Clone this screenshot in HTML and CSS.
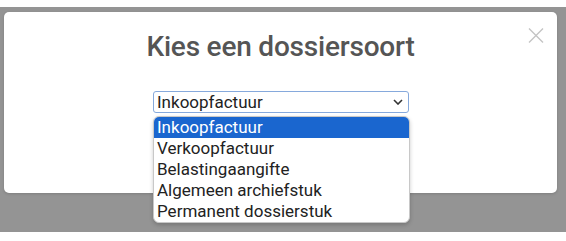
FILE: index.html
```html
<!DOCTYPE html>
<html lang="nl">
<head>
<meta charset="utf-8">
<title>Kies een dossiersoort</title>
<link rel="stylesheet" href="styles.css">
</head>
<body>
<div class="page">
  <div class="backdrop">
    <div class="modal">
      <button class="close" aria-label="Sluiten">
        <svg width="16" height="15" viewBox="0 0 16 15"><path d="M1 0.5 L15 14.5 M15 0.5 L1 14.5" stroke="#c4c4c4" stroke-width="1.4" fill="none"/></svg>
      </button>
      <h1 class="title">Kies een dossiersoort</h1>
      <div class="select-wrap">
        <div class="select">
          <span class="select-value">Inkoopfactuur</span>
          <svg class="chevron" width="10" height="6" viewBox="0 0 10 6"><path d="M1 1 L5 5 L9 1" stroke="#333" stroke-width="1.6" fill="none"/></svg>
        </div>
        <ul class="options">
          <li class="option selected">Inkoopfactuur</li>
          <li class="option">Verkoopfactuur</li>
          <li class="option">Belastingaangifte</li>
          <li class="option">Algemeen archiefstuk</li>
          <li class="option">Permanent dossierstuk</li>
        </ul>
      </div>
    </div>
  </div>
</div>
</body>
</html>
```
FILE: styles.css
```css
* { box-sizing: border-box; }
html, body { margin: 0; padding: 0; background: #fff; }
body { font-family: Roboto, "Liberation Sans", sans-serif; }
.page { padding-top: 7px; width: 566px; height: 241px; overflow: hidden; }
.backdrop {
  background: #949494;
  height: 225px;
  padding: 5px 9px 0 4px;
}
.modal {
  position: relative;
  background: #fff;
  height: 181px;
  border-radius: 5px;
  display: flex;
  flex-direction: column;
  align-items: center;
  box-shadow: 0 1px 3px rgba(0,0,0,0.15);
}
.close {
  position: absolute;
  top: 16px;
  right: 13px;
  padding: 0;
  border: 0;
  background: none;
  width: 16px;
  height: 15px;
  display: block;
}
.close svg { display: block; }
.title {
  margin: 18px 0 0;
  font-size: 28px;
  line-height: 34px;
  font-weight: 500;
  letter-spacing: -0.2px;
  color: #555;
}
.select-wrap {
  position: relative;
  margin-top: 27px;
  margin-left: 1px;
  width: 256px;
}
.select {
  height: 22px;
  border: 1px solid #86a9dc;
  border-radius: 3px;
  background: #fff;
  display: flex;
  align-items: center;
  justify-content: space-between;
  padding: 0 4px 0 3px;
  color: #222;
  font-size: 17px;
  line-height: 20px;
}
.chevron { display: block; margin-right: 1px; }
.options {
  position: absolute;
  top: 25px;
  left: 0;
  width: 257px;
  margin: 0;
  padding: 0;
  list-style: none;
  background: #fff;
  border: 1px solid #c8c8c8;
  border-radius: 6px;
  overflow: hidden;
  box-shadow: 0 2px 4px rgba(0,0,0,0.2);
}
.option {
  height: 21px;
  line-height: 21px;
  padding: 0 3px;
  font-size: 17px;
  color: #222;
  white-space: nowrap;
}
.option.selected {
  background: #1a66cf;
  color: #fff;
}
```
